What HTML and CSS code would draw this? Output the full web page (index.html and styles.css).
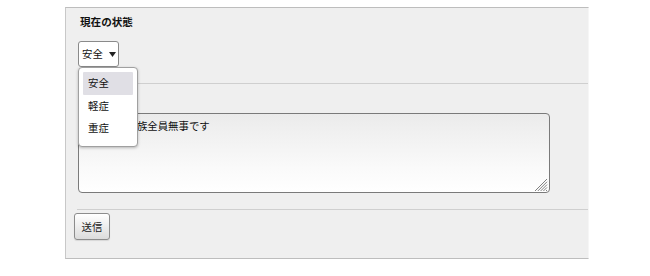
FILE: index.html
```html
<!DOCTYPE html>
<html lang="ja">
<head>
<meta charset="utf-8">
<link rel="stylesheet" href="styles.css">
</head>
<body>
<form class="panel">
  <div class="status">
    <h3 class="title">現在の状態</h3>
    <div class="select-wrap">
      <div class="select">
        <span class="select-value">安全</span>
        <svg class="arrow" width="7" height="5" viewBox="0 0 7 5"><path d="M0 0H7L3.5 5Z" fill="#222"/></svg>
      </div>
      <ul class="menu">
        <li class="menu-item active">安全</li>
        <li class="menu-item">軽症</li>
        <li class="menu-item">重症</li>
      </ul>
    </div>
  </div>
  <div class="rule"></div>
  <div class="message">
    <div class="textarea-wrap">
      <textarea class="textarea">私たちの家族全員無事です</textarea>
      <svg class="grip" width="14" height="14" viewBox="0 0 14 14">
        <path d="M13 1L1 13M13 3.8L3.8 13M13 6.6L6.6 13M13 9.4L9.4 13M13 12L12 13" stroke="#808080" stroke-width="1" fill="none"/>
      </svg>
    </div>
  </div>
  <div class="rule rule-2"></div>
  <div class="actions">
    <button type="button" class="button">送信</button>
  </div>
</form>
</body>
</html>
```

FILE: styles.css
```css
html, body {
  margin: 0;
  padding: 0;
  background: #ffffff;
}

body {
  font-family: "Noto Sans CJK JP", "Noto Sans", sans-serif;
  font-size: 10.4px;
  color: #111;
}

.panel {
  margin: 7px 0 0 65px;
  width: 524px;
  height: 252px;
  box-sizing: border-box;
  background: #efefef;
  border-top: 1px solid #bdbdbd;
  border-bottom: 1px solid #bdbdbd;
  border-left: 1px solid #c8c8c8;
  border-right: 1px solid #f6f6f6;
  display: flex;
  flex-direction: column;
}

.status {
  padding: 7px 0 0 12px;
}

.title {
  margin: 0 0 12px 2px;
  font-size: 10.6px;
  line-height: 14px;
  font-weight: bold;
  color: #111;
}

.select-wrap {
  position: relative;
  width: 41px;
}

.select {
  box-sizing: border-box;
  width: 41px;
  height: 26px;
  background: #fff;
  border: 1px solid #8a8a8a;
  border-radius: 3px;
  display: flex;
  align-items: center;
  padding-left: 3px;
  gap: 6px;
}

.select-value {
  font-size: 10.4px;
  line-height: 14px;
}

.arrow {
  display: block;
}

.menu {
  position: absolute;
  left: 0;
  top: 26px;
  margin: 0;
  padding: 4px 4px 6px 4px;
  list-style: none;
  width: 60px;
  box-sizing: border-box;
  background: #fff;
  border: 1px solid #a0a0a0;
  border-radius: 4px;
  box-shadow: 0 1px 3px rgba(0,0,0,0.25);
  z-index: 5;
}

.menu-item {
  height: 22.5px;
  line-height: 22.5px;
  padding-left: 5px;
  font-size: 10.4px;
  color: #111;
}

.menu-item.active {
  background: #e0dfe5;
  border-radius: 1px;
}

.rule {
  margin: 16px 0 0 12px;
  height: 1px;
  background: #cfcfcf;
}

.message {
  padding: 29px 0 0 12px;
}

.textarea-wrap {
  position: relative;
  width: 472px;
  height: 80px;
}

.textarea {
  display: block;
  box-sizing: border-box;
  width: 472px;
  height: 80px;
  margin: 0;
  padding: 5px 6px 5px 6px;
  border: 1px solid #7a7a7a;
  border-radius: 4px;
  background: linear-gradient(#ebebeb, #fafafa 70%, #ffffff);
  font-family: "Noto Sans CJK JP", "Noto Sans", sans-serif;
  font-size: 10.4px;
  line-height: 14px;
  color: #111;
  resize: none;
  outline: none;
}

.grip {
  position: absolute;
  right: 2px;
  bottom: 1px;
}

.rule-2 {
  margin: 16px 0 0 11px;
}

.actions {
  padding: 3px 0 0 8px;
}

.button {
  box-sizing: border-box;
  width: 36px;
  height: 27px;
  margin: 0;
  padding: 0;
  border: 1px solid #8c8c8c;
  border-radius: 3px;
  background: linear-gradient(#ffffff, #dcdcdc);
  font-family: "Noto Sans CJK JP", "Noto Sans", sans-serif;
  font-size: 10.4px;
  color: #222;
  box-shadow: 0 1px 1px rgba(0,0,0,0.1);
}
```
